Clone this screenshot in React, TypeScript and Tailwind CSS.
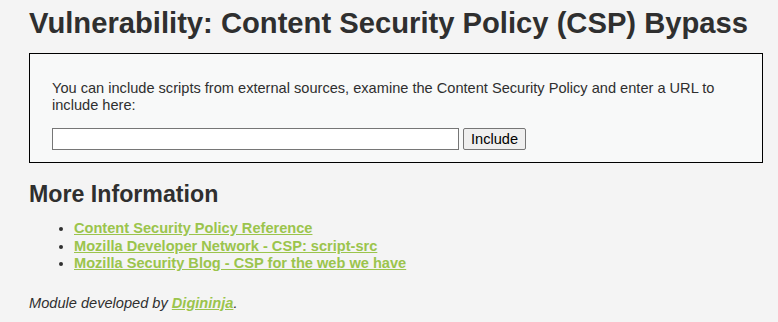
export default function App() {
  return (
    <div className="min-h-[322px] w-full bg-[#f4f4f4] text-[#2f2f2f] pl-[29px] pr-[16px] pt-[7px]" style={{ fontFamily: '"Liberation Sans", Arial, sans-serif' }}>
      <h1 className="text-[29.2px] font-bold leading-[32px]">Vulnerability: Content Security Policy (CSP) Bypass</h1>
      <div className="mt-[14px] w-[734px] border border-black bg-[#f8f9f9] pl-[22px] pr-[20px] pt-[26px] pb-[12px]">
        <p className="text-[14.6px] leading-[17px]">You can include scripts from external sources, examine the Content Security Policy and enter a URL to include here:</p>
        <div className="mt-[14px] flex items-center gap-[4px]">
          <input type="text" className="h-[22px] w-[407px] border border-[#767676] bg-white" />
          <button className="h-[22px] rounded-[2px] border border-[#767676] bg-[#efefef] px-[7px] text-[14.6px] leading-[16px] text-black">Include</button>
        </div>
      </div>
      <h2 className="mt-[18px] text-[23.2px] font-bold leading-[26px]">More Information</h2>
      <ul className="mt-[13px] list-disc pl-[45px] text-[14.6px] font-bold leading-[17.5px]">
        <li><a href="#" className="text-[#9bc44c] underline">Content Security Policy Reference</a></li>
        <li><a href="#" className="text-[#9bc44c] underline">Mozilla Developer Network - CSP: script-src</a></li>
        <li><a href="#" className="text-[#9bc44c] underline">Mozilla Security Blog - CSP for the web we have</a></li>
      </ul>
      <p className="mt-[22px] text-[14.6px] italic leading-[17px]">Module developed by <a href="#" className="font-bold text-[#9bc44c] underline">Digininja</a>.</p>
    </div>
  );
}
